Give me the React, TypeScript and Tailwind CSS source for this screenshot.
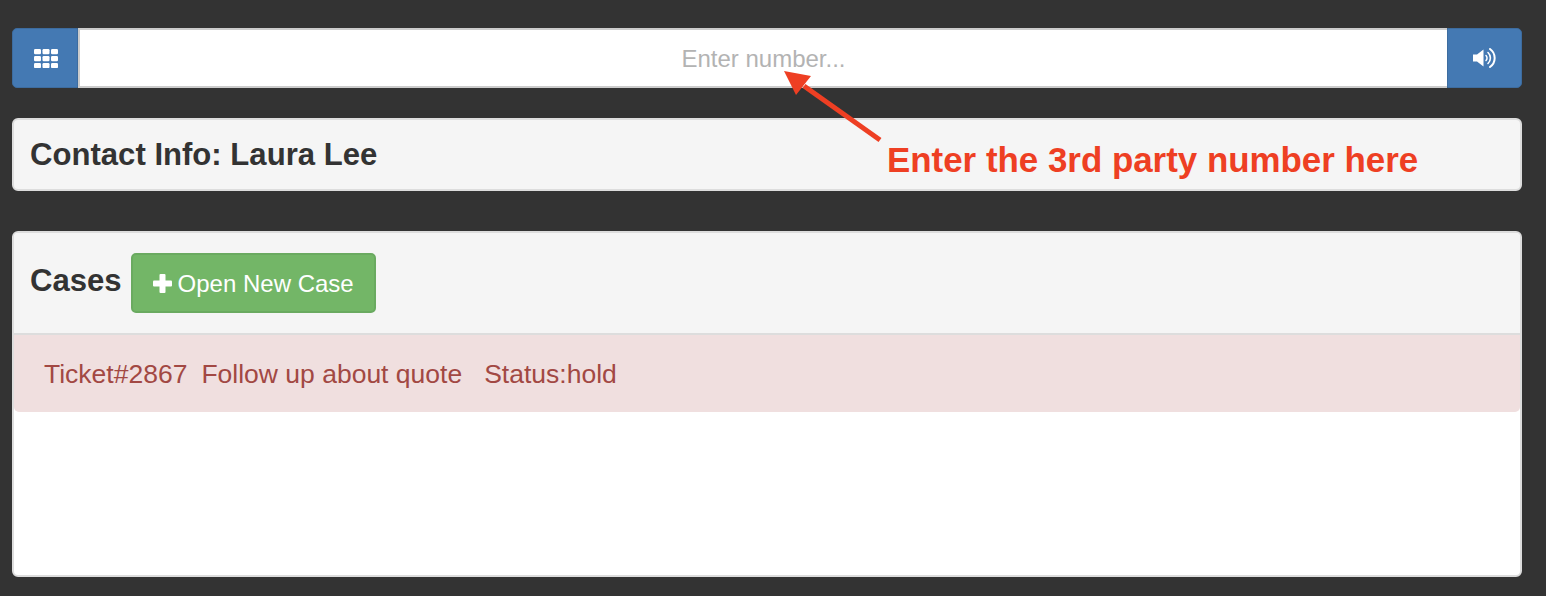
import React from 'react';

const font = { fontFamily: '"Liberation Sans", Arial, sans-serif' };

const GridIcon: React.FC = () => (
    <svg className="ml-[1px]" width="24" height="19" viewBox="0 0 24 19" fill="#fff">
        {[0, 7, 14].map(y =>
            [0, 8.500, 17].map(x => <rect key={`${x}-${y}`} x={x} y={y} width="7" height="5.200" rx="1.200" />)
        )}
    </svg>
);

const VolumeIcon: React.FC = () => (
    <svg width="24" height="20" viewBox="0 0 24 20" fill="none">
        <path d="M0 6.500h4L10.500 1.500v17L4 13.500H0z" fill="#fff" />
        <path d="M13 7.500a3.500 3.500 0 0 1 0 5" stroke="#fff" strokeWidth="1.500" strokeLinecap="round" />
        <path d="M15 4.500a7.500 7.500 0 0 1 0 11" stroke="#fff" strokeWidth="1.600" strokeLinecap="round" />
        <path d="M17 1a11 11 0 0 1 0 18" stroke="#fff" strokeWidth="2" strokeLinecap="round" />
    </svg>
);

const App: React.FC = () => {
    return (
        <div className="relative h-[596px] w-[1546px] overflow-hidden bg-[#333333] pt-[28px] pl-[12px] pr-[24px] text-[#333333]" style={font}>
            <div className="flex h-[60px]">
                <div className="flex w-[66px] items-center justify-center rounded-l-[5px] border border-[#3d6c9f] bg-[#4479b3]">
                    <GridIcon />
                </div>
                <div className="flex flex-1 items-center justify-center border-y-2 border-l-2 border-[#cccccc] bg-white pt-[2px] text-[24px] text-[#b3b3b3]">
                    Enter number...
                </div>
                <div className="flex w-[75px] items-center justify-center rounded-r-[5px] border border-[#3d6c9f] bg-[#4479b3]">
                    <VolumeIcon />
                </div>
            </div>

            <div className="mt-[30px] flex h-[73px] items-center rounded-[6px] border-2 border-[#dddddd] bg-[#f5f5f5] pl-[16px] text-[31.100px] leading-none font-semibold">
                Contact Info: Laura Lee
            </div>

            <div className="mt-[40px] h-[346px] overflow-hidden rounded-[6px] border-2 border-[#dddddd] bg-white">
                <div className="flex h-[102px] items-start border-b-2 border-[#dddddd] bg-[#f5f5f5] pl-[16px]">
                    <span className="mt-[30px] text-[31.100px] leading-[36px] font-semibold">Cases</span>
                    <button className="mt-[20px] ml-[9px] flex h-[60px] w-[245px] items-center justify-center gap-[6px] rounded-[5px] border-2 border-[#6aaa60] bg-[#73b667] pt-[1px] text-[24px] text-white">
                        <svg width="19" height="19" viewBox="0 0 19 19" fill="#fff">
                            <rect x="6.500" y="0" width="6" height="19" rx="1" />
                            <rect x="0" y="6.500" width="19" height="6" rx="1" />
                        </svg>
                        Open New Case
                    </button>
                </div>
                <div className="flex h-[77px] items-center whitespace-pre rounded-b-[5px] bg-[#f0dfdf] pt-[2px] pl-[30px] text-[26.500px] text-[#a24843]">
                    <span>Ticket#2867</span>
                    <span className="ml-[14px]">Follow up about quote</span>
                    <span className="ml-[22px]">Status:hold</span>
                </div>
            </div>

            <svg className="absolute top-[70px] left-[784px]" width="100" height="75" viewBox="0 0 100 75" fill="none">
                <path d="M96 70 L20 16" stroke="#ee3f23" strokeWidth="5" />
                <path d="M0 1 L27 6 L12 25 Z" fill="#ee3f23" />
            </svg>
            <div className="absolute top-[139px] left-[887px] text-[34.900px] leading-[42px] font-bold whitespace-nowrap text-[#ee3f23]">
                Enter the 3rd party number here
            </div>
        </div>
    );
};

export default App;
